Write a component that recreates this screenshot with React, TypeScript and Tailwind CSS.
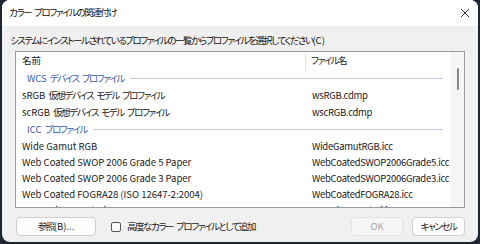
import React from "react";

const F = "font-['Noto_Sans_CJK_JP','Noto_Sans',sans-serif] [font-feature-settings:'palt']";
const TK = "tracking-[-1.45px]";

function J({ t }: { t: string }) {
  const parts = t.split(/([\x00-\x7F]+)/).filter((p) => p.length > 0);
  return (
    <>
      {parts.map((p, i) =>
        /^[\x00-\x7F]+$/.test(p) ? (
          <span key={i} className="whitespace-pre [word-spacing:1px]">{p}</span>
        ) : (
          <span key={i} className={TK}>{p}</span>
        )
      )}
    </>
  );
}

function Group({ label }: { label: string }) {
  return (
    <div className="h-[17px] flex items-center pl-[11px] pr-[8px] shrink-0">
      <span className="text-[#3a5ba8] whitespace-nowrap"><J t={label} /></span>
      <div className="flex-1 h-px bg-[#c3cce0] ml-[6px]" />
    </div>
  );
}

function Row({ name, file, jp, h }: { name: string; file: string; jp?: boolean; h?: boolean }) {
  return (
    <div className={`${h ? "h-[16px]" : "h-[17px]"} flex items-center whitespace-nowrap text-[#1a1a1a] shrink-0`}>
      <div className="w-[290px] shrink-0 pl-[6px]">{jp ? <J t={name} /> : name}</div>
      <div className="pl-[6px] tracking-[-0.3px]">{file}</div>
    </div>
  );
}

export default function App() {
  return (
    <div className={`w-[480px] h-[244px] bg-[#1e2430] px-[2px] pb-[2px] flex text-[9.5px] leading-none ${F}`}>
      <div className="flex-1 flex flex-col rounded-[8px] overflow-hidden bg-[#f0f0f0]">
        <div className="h-[26px] bg-white flex items-center justify-between pl-[7px] pr-[8px] shrink-0">
          <span className="text-[#111] whitespace-nowrap"><J t="カラー プロファイルの関連付け" /></span>
          <svg width="10" height="10" viewBox="0 0 10 10">
            <path d="M1 1 L9 9 M9 1 L1 9" stroke="#333" strokeWidth="1" fill="none" />
          </svg>
        </div>
        <div className="flex-1 flex flex-col px-[13px] pt-[8px] pb-[6px]">
          <div className="text-[#111] ml-[-5px] h-[14px] flex items-center whitespace-nowrap">
            <span><J t="システムにインストールされているプロファイルの一覧からプロファイルを選択してください(C)" /></span>
          </div>
          <div className="mt-[3px] h-[157px] border border-[#9a9a9a] bg-white flex overflow-hidden shrink-0">
            <div className="flex-1 flex flex-col overflow-hidden">
              <div className="h-[18px] flex items-center shrink-0 text-[#1a1a1a]">
                <div className="w-[290px] shrink-0 pl-[6px] h-full flex items-center border-r border-[#e5e5e5]">名前</div>
                <div className="pl-[5px]"><J t="ファイル名" /></div>
              </div>
              <Group label="WCS デバイス プロファイル" />
              <Row jp name="sRGB 仮想デバイス モデル プロファイル" file="wsRGB.cdmp" />
              <Row jp name="scRGB 仮想デバイス モデル プロファイル" file="wscRGB.cdmp" />
              <Group label="ICC プロファイル" />
              <Row name="Wide Gamut RGB" file="WideGamutRGB.icc" />
              <Row h name="Web Coated SWOP 2006 Grade 5 Paper" file="WebCoatedSWOP2006Grade5.icc" />
              <Row h name="Web Coated SWOP 2006 Grade 3 Paper" file="WebCoatedSWOP2006Grade3.icc" />
              <Row h name="Web Coated FOGRA28 (ISO 12647-2:2004)" file="WebCoatedFOGRA28.icc" />
              <Row h name="U.S. Web Uncoated v2" file="USWebUncoated.icc" />
            </div>
            <div className="w-[13px] bg-[#f5f5f5] flex justify-center pt-[16px] shrink-0">
              <div className="w-[2px] h-[22px] rounded-full bg-[#858585]" />
            </div>
          </div>
          <div className="mt-[9px] flex items-center whitespace-nowrap">
            <button className="w-[80px] h-[19px] ml-[1px] bg-[#fdfdfd] border border-[#d0d0d0] rounded-[4px] text-[#1a1a1a] flex items-center justify-center">
              <J t="参照(B)..." />
            </button>
            <div className="ml-[15px] w-[10px] h-[10px] border border-[#555] rounded-[2px] bg-white" />
            <span className="ml-[6px] text-[#1a1a1a]"><J t="高度なカラー プロファイルとして追加" /></span>
            <div className="flex-1" />
            <button className="w-[52px] h-[19px] bg-[#f6f6f6] border border-[#e3e3e3] rounded-[4px] text-[#a0a0a0] flex items-center justify-center">
              OK
            </button>
            <button className="ml-[9px] w-[53px] h-[19px] bg-[#fdfdfd] border border-[#d0d0d0] rounded-[4px] text-[#1a1a1a] flex items-center justify-center">
              <J t="キャンセル" />
            </button>
          </div>
        </div>
      </div>
    </div>
  );
}
